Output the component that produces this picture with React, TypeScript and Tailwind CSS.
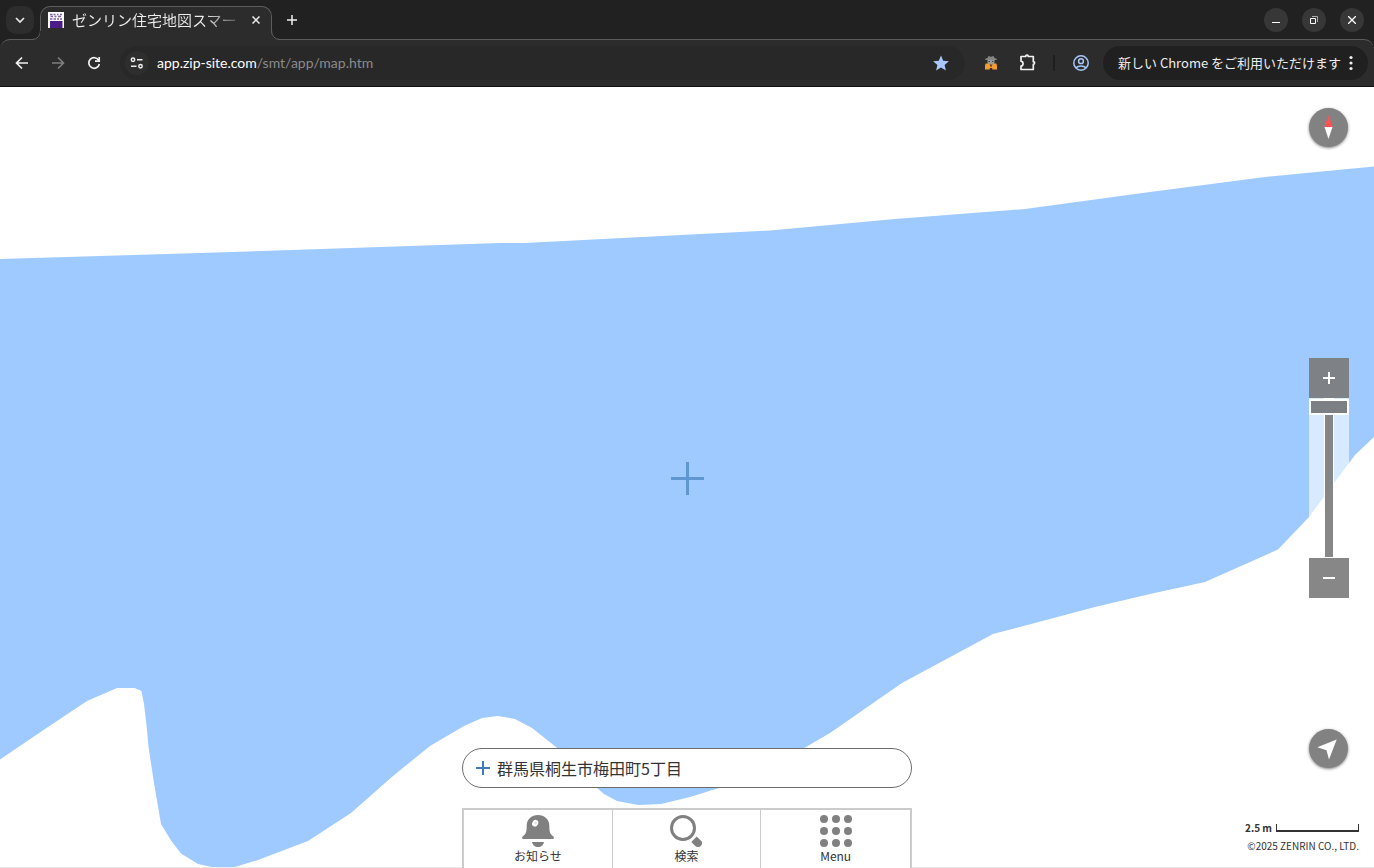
import React, { useState } from 'react';

const iconButton = 'flex size-9 shrink-0 items-center justify-center rounded-full';

function TabStrip() {
  return (
    <div className="flex h-10 shrink-0 items-end bg-[#212121]">
      <div className="flex h-10 w-10 shrink-0 items-center justify-center">
        <button aria-label="タブを検索" className="flex size-7 items-center justify-center rounded-[10px] bg-[#2d2d2d]">
          <svg width="12" height="12" viewBox="0 0 12 12" fill="none" stroke="#e8e8e8" strokeWidth="1.700">
            <path d="M2 4l4 4 4-4" />
          </svg>
        </button>
      </div>
      <div className="relative z-10 flex h-[34px] w-[232px] shrink-0 items-center rounded-t-[10px] border-x border-t border-[#5c5c5c] bg-[#2c2c2c] pb-[7px] pl-[7px] pr-[7px]">
        <svg className="absolute -left-[9px] bottom-0" width="9" height="10" viewBox="0 0 9 10">
          <path d="M0 10Q9 9 9 0V10z" fill="#2c2c2c" />
          <path d="M0 9.500Q8.500 9 8.500 0" fill="none" stroke="#5c5c5c" />
        </svg>
        <div className="absolute -left-px bottom-0 h-[9px] w-px bg-[#2c2c2c]" />
        <svg className="absolute -right-[9px] bottom-0" width="9" height="10" viewBox="0 0 9 10">
          <path d="M9 10Q0 9 0 0V10z" fill="#2c2c2c" />
          <path d="M9 9.500Q.5 9 .5 0" fill="none" stroke="#5c5c5c" />
        </svg>
        <svg width="16" height="16" viewBox="0 0 16 16" className="shrink-0">
          <path d="M0 0h16v16H0z" fill="#fff" />
          <path d="M2 9h12.500v7H2z" fill="#4b1c87" />
          <path d="M2 2.500h2.500M5.500 2.500h2M9 2.500h1.500M12 2.500h2M2.500 4.500H5M6.500 4.500h2M10 4.500h3M2 7h2.500M5.500 7h2.500M9 7h2M12 7h2" stroke="#7c62a6" strokeWidth="1.400" />
        </svg>
        <span className="ml-2 w-[166px] overflow-hidden whitespace-nowrap bg-linear-to-r from-[#eeeeee] from-80% to-[#555555] bg-clip-text text-[15px] text-transparent">
          ゼンリン住宅地図スマー
        </span>
        <button aria-label="タブを閉じる" className="ml-auto flex size-4 shrink-0 items-center justify-center">
          <svg width="8" height="8" viewBox="0 0 8 8" stroke="#eee" strokeWidth="1.500">
            <path d="M.5.5l7 7M7.500.5l-7 7" />
          </svg>
        </button>
      </div>
      <button aria-label="新しいタブ" className="ml-1.5 flex h-10 w-7 items-center justify-center">
        <svg width="12" height="12" viewBox="0 0 12 12" stroke="#eee" strokeWidth="1.500">
          <path d="M6 1v10M1 6h10" />
        </svg>
      </button>
      <div className="ml-auto flex h-10 items-center gap-3.5 pr-2.5">
        <button aria-label="最小化" className="flex size-6 items-center justify-center rounded-full bg-[#373737]">
          <svg width="10" height="10" viewBox="0 0 10 10"><path d="M1 7h8v1H1z" fill="#fff" /></svg>
        </button>
        <button aria-label="元に戻す" className="flex size-6 items-center justify-center rounded-full bg-[#373737]">
          <svg width="8" height="8" viewBox="0 0 8 8" fill="none">
            <path d="M2 .5h5.500V6" stroke="#aaa" />
            <path d="M.5 2.500h5v5h-5z" stroke="#fff" />
          </svg>
        </button>
        <button aria-label="閉じる" className="flex size-6 items-center justify-center rounded-full bg-[#373737]">
          <svg width="8" height="8" viewBox="0 0 8 8" stroke="#fff" strokeWidth="1.300"><path d="M0 0l8 8M8 0l-8 8" /></svg>
        </button>
      </div>
    </div>
  );
}

function Toolbar() {
  return (
    <div className="-mt-px shrink-0 bg-[#212121]">
      <div className="flex h-12 items-center rounded-t-[10px] border-b border-t border-b-[#111111] border-t-[#5c5c5c] bg-[#2c2c2c] pl-1 pr-1.5">
        <button aria-label="戻る" className={iconButton}>
          <svg width="14" height="14" viewBox="0 0 14 14" fill="none" stroke="#f1f1f1" strokeWidth="1.700"><path d="M13 7H2M7 1.500L1.500 7 7 12.500" /></svg>
        </button>
        <button aria-label="進む" className={iconButton}>
          <svg width="14" height="14" viewBox="0 0 14 14" fill="none" stroke="#7e7e7e" strokeWidth="1.700"><path d="M1 7h11M7 1.500L12.500 7 7 12.500" /></svg>
        </button>
        <button aria-label="再読み込み" className={iconButton}>
          <svg width="14" height="14" viewBox="0 0 14 14" fill="none" stroke="#f1f1f1" strokeWidth="1.700">
            <path d="M11.800 4.500A5.300 5.300 0 1 0 12.300 8" />
            <path d="M12.200 1v4.200H8" />
          </svg>
        </button>
        <div className="ml-2 flex h-[34px] min-w-0 flex-1 items-center rounded-full bg-[#282828] px-[5px]">
          <button aria-label="サイト情報" className="flex size-6 shrink-0 items-center justify-center rounded-full bg-[#2e2e2e]">
            <svg width="14" height="12" viewBox="0 0 14 12" fill="none" stroke="#eee" strokeWidth="1.500">
              <circle cx="3" cy="2.800" r="1.700" /><path d="M7 2.800h5.500M1 9.200h5.500" /><circle cx="10.500" cy="9.200" r="1.700" />
            </svg>
          </button>
          <a href="#map" className="ml-2 min-w-0 flex-1 truncate font-['Lato',sans-serif] text-sm text-[#8b8b8b]">
            <span className="text-white">app.zip-site.com</span>/smt/app/map.htm
          </a>
          <button aria-label="ブックマークを編集" className="mr-[11px] shrink-0">
            <svg width="16" height="16" viewBox="0 0 16 16" fill="#a8c7fa"><path d="M8 .5l2.200 5.200 5.700.5-4.300 3.700 1.300 5.600L8 12.500l-4.900 3 1.300-5.600L.1 6.200l5.700-.5z" /></svg>
          </button>
        </div>
        <button aria-label="拡張機能" className="ml-[18px] shrink-0">
          <svg width="16" height="16" viewBox="0 0 16 16">
            <path d="M4.500 3l.8-1.800h1.500L8 2l1.200-.8h1.500l.8 1.800 2.200.7V5H2.300V3.700z" fill="#858585" />
            <path d="M4.500 5h7v3L10 10H6L4.500 8z" fill="#9b9b9b" />
            <path d="M5.500 6H7v1H5.500zM9 6h1.500v1H9z" fill="#444" />
            <path d="M2.500 8.500H6L8 12l2-3.500h3.500L14 11v3.500H9.200V13H6.800v1.500H2V11z" fill="#f49b32" />
            <path d="M6.500 9.500h3L8 12z" fill="#70482a" />
          </svg>
        </button>
        <button aria-label="拡張機能の一覧" className="ml-5 shrink-0">
          <svg width="18" height="18" viewBox="0 0 18 18" fill="none" stroke="#f1f1f1" strokeWidth="1.700" strokeLinejoin="round">
            <path d="M2.500 2.500h4.200a1.300 1.300 0 0 1 2.600 0h5v5.200a1.300 1.300 0 0 1 0 2.600v5.200H2v-3.300c2.700-.4 2.700-4.500 0-5V2.500z" />
          </svg>
        </button>
        <div className="ml-4 h-4 w-0.5 shrink-0 bg-[#1f1f1f]" />
        <button aria-label="プロフィール" className="ml-[17px] shrink-0">
          <svg width="18" height="18" viewBox="0 0 18 18" fill="none" stroke="#a8c7fa" strokeWidth="1.500">
            <circle cx="9" cy="9" r="7.200" /><circle cx="9" cy="7.200" r="2.400" /><path d="M3.800 13.800c3-2.500 7.400-2.500 10.400 0" />
          </svg>
        </button>
        <button className="ml-[13px] flex h-[34px] w-[265px] shrink-0 items-center justify-between whitespace-nowrap rounded-full bg-[#202020] px-[15px] font-['Noto_Sans_CJK_JP',sans-serif] text-[13px] text-[#eeeeee]">
          新しい Chrome をご利用いただけます
          <svg width="4" height="16" viewBox="0 0 4 16" fill="#eee"><circle cx="2" cy="2.500" r="1.600" /><circle cx="2" cy="8" r="1.600" /><circle cx="2" cy="13.500" r="1.600" /></svg>
        </button>
      </div>
    </div>
  );
}

function MapCanvas() {
  return (
    <svg className="absolute inset-0 size-full" viewBox="0 87 1374 781" preserveAspectRatio="xMidYMid slice" aria-hidden="true">
      <path
        fill="#9fcaff"
        d="M0 259L200 253 500 243 525 243 770 230.500 895 219 1025 209 1150 192 1265 177 1374 166.500V437L1355 455 1340 475 1309 517 1278 549.500 1205 582 1150 594 1095 607 993 634 902 683 830 733 806 747 760 772 719 788 690 797 661 804 638 805 617 801 604 794 597 788 580 770 556 747 532 728 515 719 498 716 482 718 464 726 430 746 393 776 351 813 308 841 258 860 235 867 212 867 198 864 181 853.500 171 840.500 161 824 154 783 148.500 747 147 730 144 704 141.500 691 134.500 688 117 688 87 701 45 729 0 759.500z"
      />
    </svg>
  );
}

function ZoomControl() {
  const [level, setLevel] = useState(20);
  const button = 'flex size-10 items-center justify-center bg-[#7a7a7a]/90';
  return (
    <div className="flex w-10 flex-col">
      <button aria-label="拡大" className={button} onClick={() => setLevel(Math.min(20, level + 1))}>
        <svg width="12" height="12" viewBox="0 0 12 12" fill="#fff"><path d="M5 0h2v12H5z" /><path d="M0 5h12v2H0z" /></svg>
      </button>
      <div className="relative h-40 bg-white/60">
        <div className="absolute inset-y-0 left-[15px] w-2.5 border border-white bg-[#7a7a7a]/90 bg-clip-padding" />
        <input
          type="range"
          aria-label="縮尺"
          min={1}
          max={20}
          value={level}
          onChange={(e) => setLevel(Number(e.target.value))}
          className="relative m-0 block h-40 w-10 appearance-none bg-transparent pt-px [direction:rtl] [writing-mode:vertical-lr] [&::-webkit-slider-thumb]:h-4 [&::-webkit-slider-thumb]:w-10 [&::-webkit-slider-thumb]:appearance-none [&::-webkit-slider-thumb]:border-2 [&::-webkit-slider-thumb]:border-white [&::-webkit-slider-thumb]:bg-[#7c8084]"
        />
      </div>
      <button aria-label="縮小" className={button} onClick={() => setLevel(Math.max(1, level - 1))}>
        <svg width="12" height="12" viewBox="0 0 12 12" fill="#fff"><path d="M0 5h12v2H0z" /></svg>
      </button>
    </div>
  );
}

const menuCell = 'flex flex-col items-center pt-[5px] text-xs leading-[18px]';

function BottomPanel() {
  return (
    <div className="absolute bottom-0 left-1/2 w-[450px] -translate-x-1/2">
      <button className="flex h-10 w-full items-center gap-[7px] rounded-full border border-[#6c6c6c] bg-white pl-[13px] text-left text-base">
        <svg width="14" height="14" viewBox="0 0 14 14" fill="#4179bd"><path d="M6 0h2v14H6z" /><path d="M0 6h14v2H0z" /></svg>
        群馬県桐生市梅田町5丁目
      </button>
      <nav className="mt-5 grid h-[60px] grid-cols-3 divide-x divide-[#cbcbcb] border-2 border-b-0 border-[#cbcbcb] bg-white">
        <button className={menuCell}>
          <svg width="32" height="32" viewBox="0 0 32 32" fill="#808080">
            <path d="M16 0c6.500 0 11.300 4.500 11.300 10.500 0 6 .7 8.500 3.500 10.500 1.600 1.200 1.600 3-.8 3H2c-2.400 0-2.400-1.800-.8-3 2.800-2 3.500-4.500 3.500-10.500C4.700 4.500 9.500 0 16 0z" />
            <path d="M10 27h12c-.5 3-3 5-6 5s-5.500-2-6-5z" />
            <ellipse cx="13.200" cy="8.300" rx="2.900" ry="3.500" transform="rotate(30 13.200 8.300)" fill="#fff" />
            <ellipse cx="13.600" cy="7.900" rx="1.100" ry="1.600" transform="rotate(30 13.600 7.900)" fill="#e2e2e2" />
          </svg>
          お知らせ
        </button>
        <button className={menuCell}>
          <svg width="32" height="32" viewBox="0 0 32 32" fill="none">
            <circle cx="13" cy="13" r="11.500" stroke="#808080" strokeWidth="3" />
            <path d="M26.700 21.500L21.300 27l3.700 3.700c2 2 4.500 1.500 6 0s1.500-3.700 0-5z" fill="#808080" />
          </svg>
          検索
        </button>
        <button className={menuCell}>
          <svg width="32" height="32" viewBox="0 0 32 32" fill="#808080">
            {[4, 16, 28].map((y) => [4, 16, 28].map((x) => <circle key={`${x}-${y}`} cx={x} cy={y} r="4" />))}
          </svg>
          Menu
        </button>
      </nav>
    </div>
  );
}

export default function App() {
  const round = 'flex size-[39px] items-center justify-center rounded-full bg-[#828282] shadow-[0_1px_3px_rgba(0,0,0,0.5)]';
  return (
    <div className="flex h-screen flex-col overflow-hidden font-['Noto_Sans','Noto_Sans_CJK_JP',sans-serif]">
      <header className="shrink-0">
        <TabStrip />
        <Toolbar />
      </header>
      <main id="map" className="relative min-h-0 flex-1 overflow-hidden bg-white font-['Noto_Sans_CJK_JP',sans-serif] text-[#333333]">
        <MapCanvas />
        <div className="absolute inset-x-0 bottom-0 h-px bg-[#eaeaea]" />
        <svg className="absolute left-1/2 top-1/2 -translate-x-1/2 -translate-y-1/2" width="34" height="34" viewBox="0 0 34 34" fill="#6096d2">
          <path d="M16 1h3v33h-3z" /><path d="M1 16h33v3H1z" />
        </svg>
        <button aria-label="方位" className={`absolute right-[26px] top-[21px] ${round}`}>
          <svg width="9" height="25" viewBox="0 0 9 25"><path d="M4.500 0l4 12h-8z" fill="#ff5252" /><path d="M.5 12h8l-4 12z" fill="#fff" /></svg>
        </button>
        <div className="absolute right-[25px] top-1/2 -translate-y-1/2">
          <ZoomControl />
        </div>
        <button aria-label="現在地" className={`absolute bottom-[100px] right-[26px] ${round}`}>
          <svg width="25" height="25" viewBox="0 0 25 25" fill="#fff"><path d="M20.700 3.500l-7.700 20-2.500-9.300L1.300 11.200z" /></svg>
        </button>
        <BottomPanel />
        <div className="absolute bottom-3.5 right-[15px] flex flex-col items-end text-[10px] leading-4">
          <div className="flex items-start gap-1">
            <span className="font-bold">2.5 m</span>
            <span className="mt-1 h-2 w-[83px] border border-b-2 border-t-0 border-[#333333]" />
          </div>
          <span className="mt-0.5">©2025 ZENRIN CO., LTD.</span>
        </div>
      </main>
    </div>
  );
}
